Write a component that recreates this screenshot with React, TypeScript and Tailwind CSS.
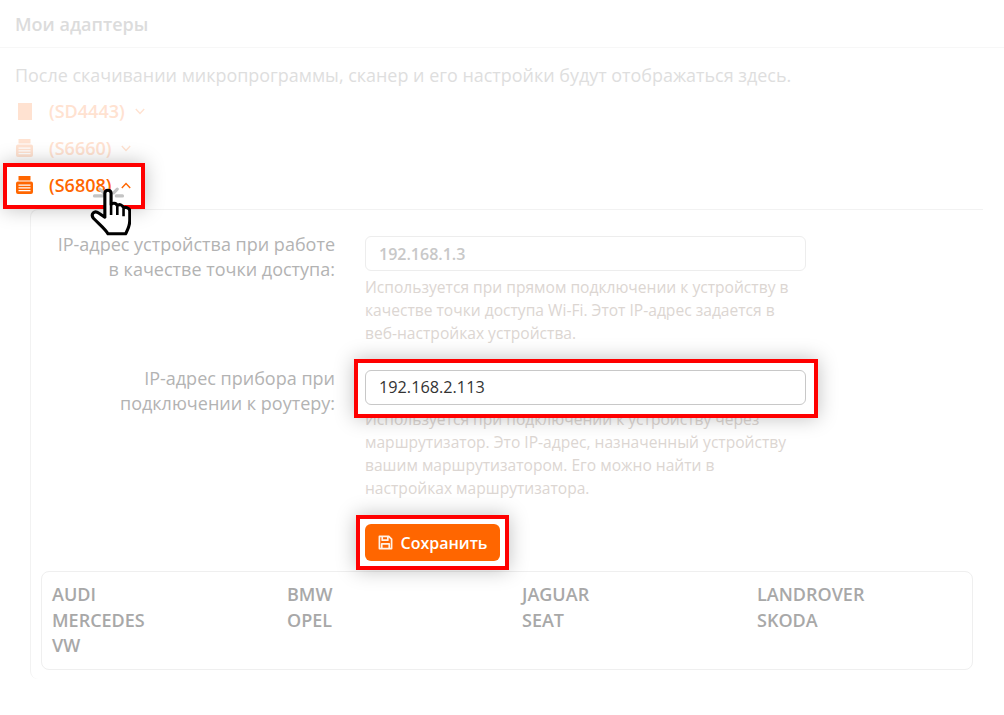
import React from 'react';

const font = { fontFamily: '"Open Sans", sans-serif' };

function AdapterIcon({ className }: { className: string }) {
  return (
    <svg viewBox="0 0 17 18" className={className} fill="currentColor">
      <path d="M2.500 0h12v4.500h-12z" />
      <path fillRule="evenodd" d="M2 5.500h13a2 2 0 0 1 2 2V16a2 2 0 0 1-2 2H2a2 2 0 0 1-2-2V7.500a2 2 0 0 1 2-2zM2.500 8.500v1.200h12V8.500zm0 2.800v1.200h12v-1.200zm0 2.800v1.200h12v-1.200z" />
    </svg>
  );
}

function Chevron({ up, className }: { up?: boolean; className: string }) {
  return (
    <svg viewBox="0 0 10 7" className={className} fill="none" stroke="currentColor" strokeWidth="1.400">
      <path d={up ? 'M.8 6 5 1.500 9.200 6' : 'M.8 1 5 5.500 9.200 1'} />
    </svg>
  );
}

function Hand() {
  return (
    <svg viewBox="0 0 42 52" className="absolute left-[87px] top-[12px] h-[54px] w-[44px]">
      <g stroke="#c4c4c4" strokeWidth="3" strokeLinecap="round">
        <path d="M7 10.500h8M34 10.500h-6M12 4l4 3.500M29 4l-3.500 3.500" />
      </g>
      <path d="M17 8c0-4 6-4 6 0v11c1-2 5-2 6 1 2-2 5-1 6 2 2-1 6 0 6 3v9c0 6-2 9-4 13H20c-2-4-7-8-14-15-3-4 1-8 5-5l6 4z" fill="#fff" stroke="#000" strokeWidth="3" strokeLinejoin="round" />
      <path d="M23 20v9M29 21v8M35 23v7" stroke="#000" strokeWidth="2.500" />
    </svg>
  );
}

const brands = ['AUDI', 'BMW', 'JAGUAR', 'LANDROVER', 'MERCEDES', 'OPEL', 'SEAT', 'SKODA', 'VW'];

export default function App() {
  return (
    <div className="h-[715px] w-[1004px] overflow-hidden bg-white" style={font}>
      <div className="flex h-[48px] items-center border-b border-[#f7f7f7] pl-[15px] pt-[2px] text-[18px] font-semibold text-[#dcdcdc]">
        Мои адаптеры
      </div>

      <p className="pl-[15px] pt-[15px] text-[17.950px] leading-[24px] text-[#dedede]">
        После скачивании микропрограммы, сканер и его настройки будут отображаться здесь.
      </p>

      <div className="mt-[12px] flex h-[24px] items-center pl-[18px] text-[18px] font-semibold text-[#ffe2d1]">
        <div className="h-[17px] w-[14px] bg-[#ffe2d1]" />
        <span className="ml-[17px]">(SD4443)</span>
        <Chevron className="ml-[10px] h-[7px] w-[10px]" />
      </div>

      <div className="mt-[13px] flex h-[24px] items-center pl-[16px] text-[18px] font-semibold text-[#ffe2d1]">
        <AdapterIcon className="h-[18px] w-[17px]" />
        <span className="ml-[16px]">(S6660)</span>
        <Chevron className="ml-[10px] h-[7px] w-[10px]" />
      </div>

      <div className="relative mt-[13px] flex h-[24px] items-center pl-[16px] text-[18px] font-semibold text-[#ff6600]">
        <div className="absolute left-[3px] top-[-10px] h-[46px] w-[142px] border-4 border-[#ff0000] bg-white shadow-[0_0_20px_rgba(0,0,0,0.25)]" />
        <AdapterIcon className="relative h-[18px] w-[17px]" />
        <span className="relative ml-[16px]">(S6808)</span>
        <Chevron up className="relative ml-[10px] h-[7px] w-[10px]" />
        <Hand />
      </div>

      <div className="ml-[30px] mr-[21px] mt-[12px] h-[470px] rounded-tl-[8px] rounded-bl-[8px] border-l border-t border-[#f2f2f2] pl-[10px] pr-[10px] pt-[26px]">
        <div className="flex">
          <div className="-mt-[4px] w-[294px] pl-[14px] text-right text-[18px] leading-[25px] text-[#b3b3b3]">
            IP-адрес устройства при работе в качестве точки доступа:
          </div>
          <div className="ml-[30px] w-[441px]">
            <div className="flex h-[35px] items-center rounded-[6px] border border-[#ededed] px-[13px] text-[16px] font-semibold text-[#c8c8c8]">
              192.168.1.3
            </div>
            <p className="mt-[5px] pr-[8px] text-[15.600px] leading-[23px] text-[#dcd6d2]">
              Используется при прямом подключении к устройству в качестве точки доступа Wi-Fi. Этот IP-адрес задается в веб-настройках устройства.
            </p>
          </div>
        </div>

        <div className="mt-[25px] flex">
          <div className="-mt-[4px] w-[294px] pl-[14px] text-right text-[18px] leading-[25px] text-[#b3b3b3]">
            IP-адрес прибора при подключении к роутеру:
          </div>
          <div className="ml-[30px] w-[441px]">
            <div className="relative h-[35px]">
              <div className="absolute -bottom-[13px] -left-[11px] -right-[12px] -top-[11px] border-4 border-[#ff0000] bg-white shadow-[0_0_20px_rgba(0,0,0,0.25)]" />
              <div className="relative flex h-[35px] items-center rounded-[6px] border border-[#c8c8c8] px-[13px] text-[16.250px] font-medium text-[#333333]">
                192.168.2.113
              </div>
            </div>
            <p className="mt-[3px] pr-[8px] text-[15.600px] leading-[23px] text-[#dcd6d2]">
              Используется при подключении к устройству через маршрутизатор. Это IP-адрес, назначенный устройству вашим маршрутизатором. Его можно найти в настройках маршрутизатора.
            </p>
            <div className="relative mt-[24px] h-[37px] w-[135px]">
              <div className="absolute -inset-[9px] border-4 border-[#ff0000] bg-white shadow-[0_0_20px_rgba(0,0,0,0.25)]" />
              <button className="relative flex h-[37px] w-[135px] items-center justify-center gap-[8px] rounded-[6px] bg-[#ff6600] text-[16px] font-semibold text-white">
                <svg viewBox="0 0 16 16" className="h-[15px] w-[15px]" fill="none" stroke="#fff2e8" strokeWidth="1.800" strokeLinejoin="round">
                  <path d="M1.500 1.500h10l3 3v10h-13zM4.500 1.500v4h6v-4M4 14.500v-5h8v5" />
                </svg>
                Сохранить
              </button>
            </div>
          </div>
        </div>

        <div className="mt-[10px] grid h-[99px] grid-cols-[repeat(4,235px)] content-start rounded-[8px] border border-[#efefef] px-[10px] pt-[10px] text-[18px] font-semibold leading-[25.500px] text-[#a8a8a8]">
          {brands.map((b) => (
            <div key={b}>{b}</div>
          ))}
        </div>
      </div>
    </div>
  );
}
